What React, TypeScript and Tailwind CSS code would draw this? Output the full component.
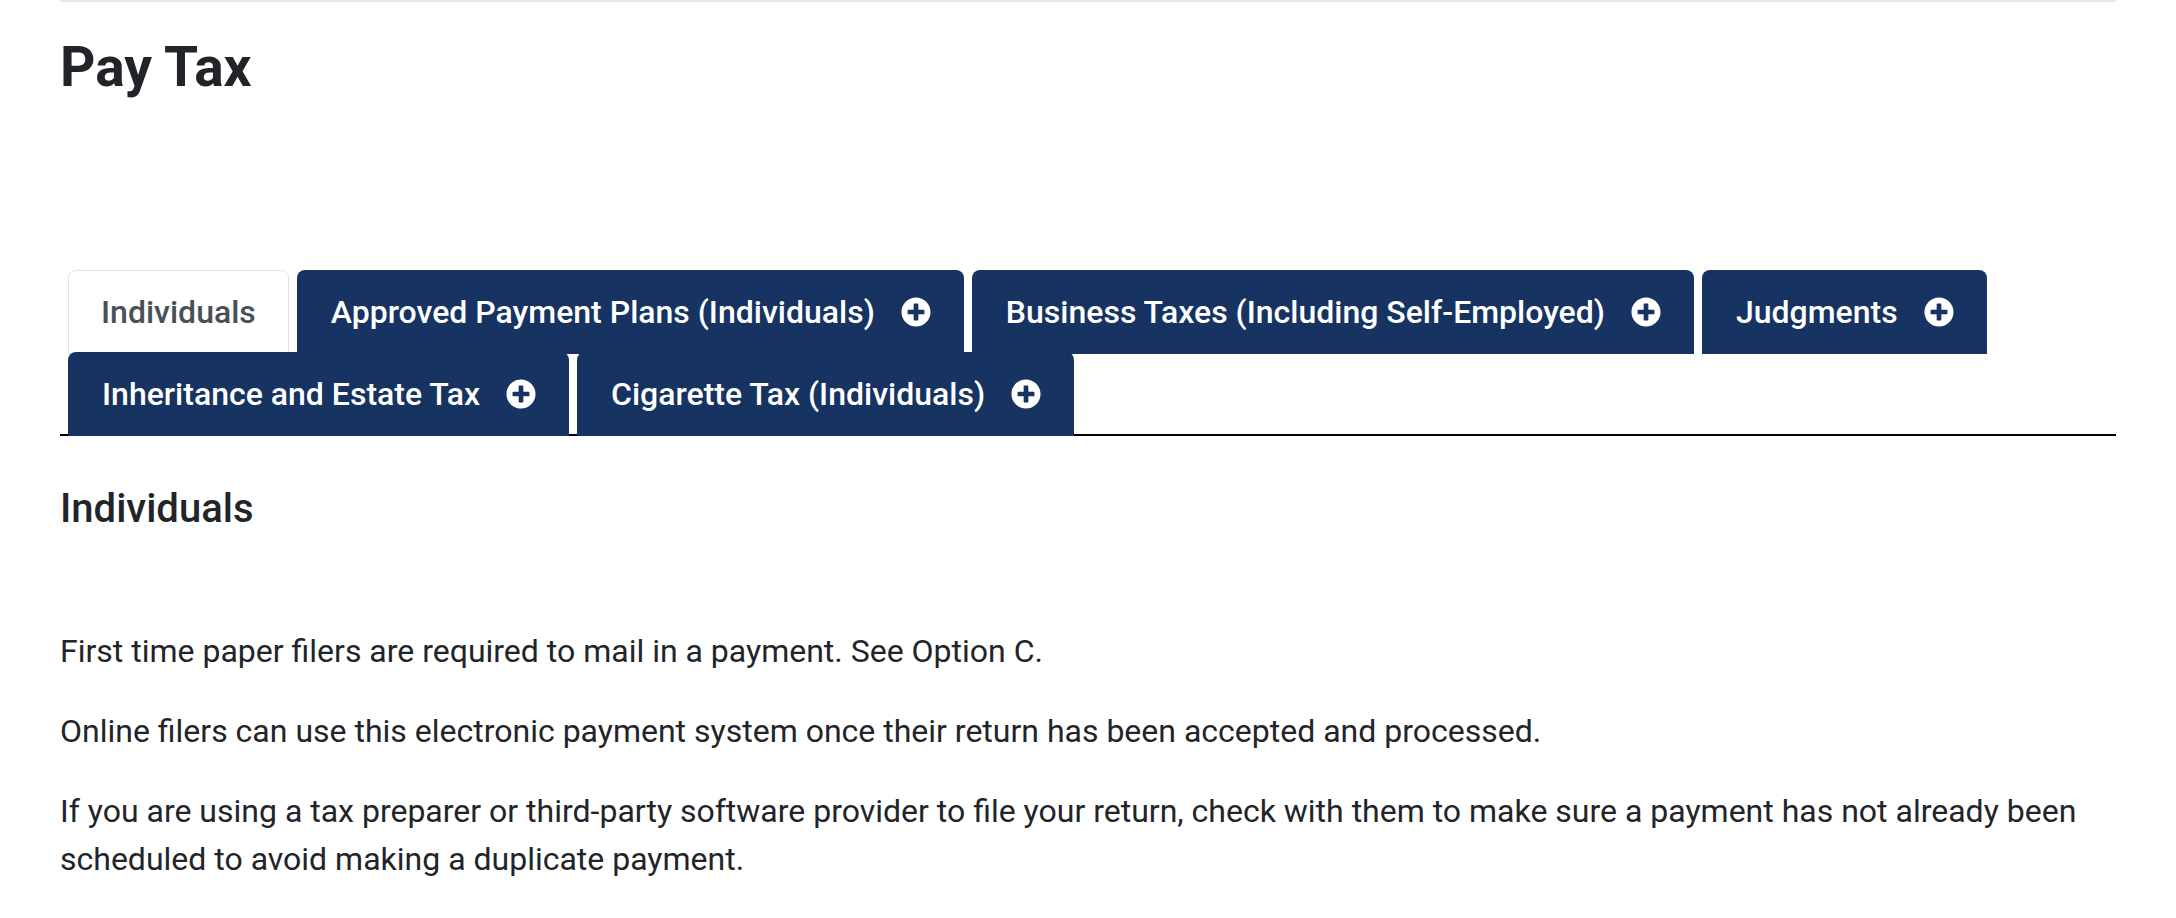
import React from "react";
import { FaPlusCircle } from "react-icons/fa";

const tabs = [
  { label: "Individuals", active: true },
  { label: "Approved Payment Plans (Individuals)" },
  { label: "Business Taxes (Including Self-Employed)" },
  { label: "Judgments" },
  { label: "Inheritance and Estate Tax" },
  { label: "Cigarette Tax (Individuals)" },
];

function Tab({ label, active }: { label: string; active?: boolean }) {
  if (active) {
    return (
      <div className="ml-[8px] -mb-[2px] flex h-[84px] items-center rounded-t-[8px] border border-[#dee2e6] bg-white px-[32px] text-[32px] font-medium text-[#495057]">
        {label}
      </div>
    );
  }
  return (
    <div className="ml-[8px] -mb-[2px] flex h-[84px] items-center rounded-t-[8px] bg-[#163362] pl-[34px] pr-[33px] text-[32px] font-medium text-white">
      <span>{label}</span>
      <FaPlusCircle className="ml-[26px] h-[30px] w-[30px] shrink-0" />
    </div>
  );
}

export default function App() {
  return (
    <div className="min-h-[918px] bg-white px-[60px] font-['Roboto',sans-serif] text-[#212529]">
      <div className="h-[2px] rounded-full bg-[#e6e7ea]" />

      <h1 className="mt-[32px] text-[55px] font-bold leading-[1.2]">Pay Tax</h1>

      <div className="mt-[170px] flex flex-wrap border-b-2 border-black">
        {tabs.map((t) => (
          <Tab key={t.label} label={t.label} active={t.active} />
        ))}
      </div>

      <h3 className="mt-[49px] text-[40px] font-medium leading-[1.2]">Individuals</h3>

      <div className="mt-[94px] text-[32px] leading-[48px]">
        <p className="mb-[32px]">First time paper filers are required to mail in a payment. See Option C.</p>
        <p className="mb-[32px]">
          Online filers can use this electronic payment system once their return has been accepted and processed.
        </p>
        <p className="mb-[32px]">
          If you are using a tax preparer or third-party software provider to file your return, check with them to
          make sure a payment has not already been scheduled to avoid making a duplicate payment.
        </p>
      </div>
    </div>
  );
}
